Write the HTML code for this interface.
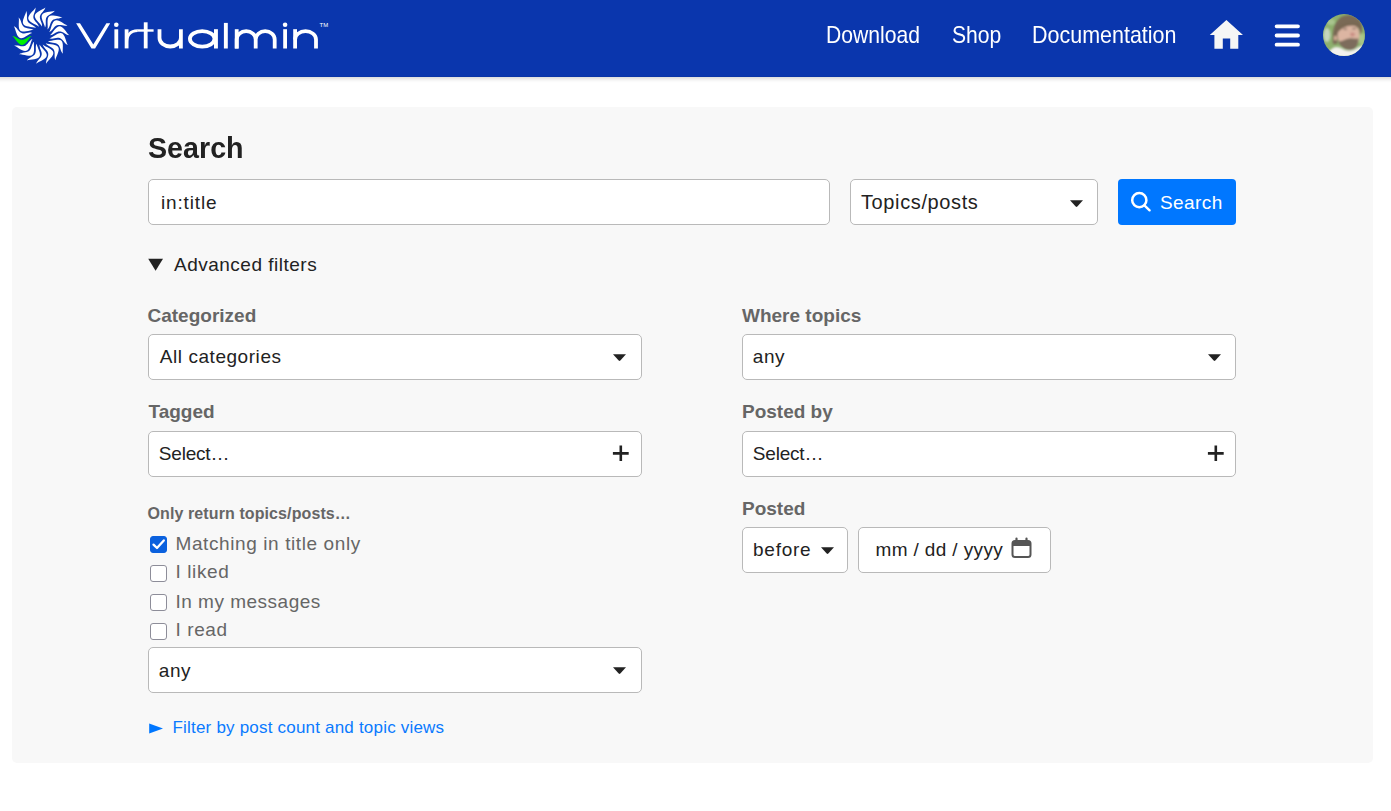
<!DOCTYPE html>
<html><head><meta charset="utf-8">
<style>
*{box-sizing:border-box;margin:0;padding:0}
html,body{width:1391px;height:811px;overflow:hidden;background:#fff;font-family:"Liberation Sans",sans-serif;color:#222}
.t{position:absolute;line-height:1;white-space:nowrap}
.hdr{position:absolute;left:0;top:0;width:1391px;height:76.5px;background:#0a36ad;border-bottom:1px solid #0834a6}
.shd{position:absolute;left:-20px;top:0;width:1431px;height:76.5px;box-shadow:0 2px 4px rgba(0,0,0,.16)}
.nav{position:absolute;top:22.5px;color:#fff;font-size:24px;line-height:1;white-space:nowrap;transform:scaleX(.88);transform-origin:0 0}
.panel{position:absolute;left:11.5px;top:106.5px;width:1361.5px;height:656.5px;background:#f8f8f8;border-radius:5px}
.inp{position:absolute;background:#fff;border:1px solid #b9b9b9;border-radius:5px;height:46px}
.r{font-size:19px;letter-spacing:.55px;color:#222}
.lbl{font-size:19px;font-weight:bold;color:#666}
.cbt{font-size:19px;letter-spacing:.6px;color:#666}
.caret{position:absolute}
.cb{position:absolute;left:149.5px;width:17px;height:17px;border:1.5px solid #8d8d99;border-radius:3px;background:#fff}
</style></head><body>
<div class="shd"></div>
<div class="hdr">
  <svg style="position:absolute;left:0;top:0" width="400" height="76" viewBox="0 0 400 76">
    <defs>
      <path id="bl" d="M-28.56,0.40 L-27.34,1.47 L-26.12,2.97 L-24.90,4.57 L-23.68,6.10 L-22.46,7.44 L-21.24,8.47 L-20.02,9.13 L-18.80,9.35 L-17.59,9.13 L-16.37,8.47 L-15.15,7.44 L-13.93,6.10 L-12.71,4.57 L-11.49,2.97 L-10.27,1.47 L-9.05,0.40 L-10.27,0.54 L-11.49,0.96 L-12.71,1.57 L-13.93,2.30 L-15.15,3.03 L-16.37,3.64 L-17.59,4.06 L-18.80,4.20 L-20.02,4.06 L-21.24,3.64 L-22.46,3.03 L-23.68,2.30 L-24.90,1.57 L-26.12,0.96 L-27.34,0.54Z"/>
    </defs>
    <g transform="translate(40.8 35.6)" fill="#fff">
      <use href="#bl" transform="rotate(20)"/><use href="#bl" transform="rotate(40)"/><use href="#bl" transform="rotate(60)"/>
      <use href="#bl" transform="rotate(80)"/><use href="#bl" transform="rotate(100)"/><use href="#bl" transform="rotate(120)"/>
      <use href="#bl" transform="rotate(140)"/><use href="#bl" transform="rotate(160)"/><use href="#bl" transform="rotate(180)"/>
      <use href="#bl" transform="rotate(200)"/><use href="#bl" transform="rotate(220)"/><use href="#bl" transform="rotate(240)"/>
      <use href="#bl" transform="rotate(260)"/><use href="#bl" transform="rotate(280)"/><use href="#bl" transform="rotate(300)"/>
      <use href="#bl" transform="rotate(320)"/><use href="#bl" transform="rotate(340)"/>
      <use href="#bl" fill="#00f000"/>
    </g>
    <g fill="#fff">
      <polygon points="76.1,23.2 80.0,23.2 93.3,44.6 106.4,23.2 110.2,23.2 95.1,48.4 91.5,48.4"/>
      <circle cx="116.3" cy="24.7" r="2.3"/>
      <rect x="114.4" y="29.3" width="3.8" height="19.1"/>
      <rect x="124.7" y="29.3" width="3.8" height="19.1"/>
      <rect x="143.8" y="22.3" width="3.8" height="26.1"/>
      <rect x="137.3" y="29.3" width="16.3" height="2.4"/>
      <rect x="223.9" y="22.9" width="3.9" height="25.6"/>
      <rect x="214" y="29.2" width="3.9" height="19.3"/>
      <circle cx="285.1" cy="24.8" r="2.3"/>
      <rect x="283.2" y="29.2" width="3.8" height="19.3"/>
      <rect x="234.8" y="29.2" width="3.8" height="19.3"/>
      <rect x="293.2" y="29.2" width="3.8" height="19.3"/>
    </g>
    <g fill="none" stroke="#fff" stroke-width="3.8">
      <path d="M126.6,44 C126.6,35 130,30.6 137.6,30.6" stroke-width="2.6"/>
      <path d="M159.5,29.3 V38 A10.7 8.5 0 0 0 180.9,38 V29.3 M180.9,36 V48.4"/>
      <ellipse cx="202.2" cy="38.85" rx="12.3" ry="7.75"/>
      <path d="M236.7,48.5 V39.5 A9.5 8.3 0 0 1 255.7,39.5 V48.5 M255.7,39.5 A9.5 8.3 0 0 1 274.7,39.5 V48.5"/>
      <path d="M295.1,39.5 A10.45 8.3 0 0 1 316,39.5 V48.5"/>
    </g>
    <text x="319.5" y="27.3" font-size="6" fill="#fff" font-family="Liberation Sans">TM</text>
  </svg>
  <div class="nav" style="left:826px">Download</div>
  <div class="nav" style="left:952px">Shop</div>
  <div class="nav" style="left:1032px;transform:scaleX(.895)">Documentation</div>
  <svg style="position:absolute;left:1209px;top:19px" width="35" height="31" viewBox="0 0 35 31">
    <path fill="#f6f6f6" d="M17.4,1 L34,16 H29.3 V29.8 H21.2 V19.5 H13.8 V29.8 H5.4 V16 H0.8Z"/>
  </svg>
  <svg style="position:absolute;left:1272px;top:22px" width="30" height="27" viewBox="0 0 30 27">
    <g stroke="#fff" stroke-width="3.8" stroke-linecap="round"><path d="M4.6,4.3 H26 M4.6,13.5 H26 M4.6,22.7 H26"/></g>
  </svg>
  <svg style="position:absolute;left:1322px;top:13px" width="44" height="44" viewBox="0 0 44 44">
    <defs><clipPath id="av"><circle cx="22" cy="22.1" r="21"/></clipPath>
    <filter id="bf" x="-20%" y="-20%" width="140%" height="140%"><feGaussianBlur stdDeviation="1"/></filter></defs>
    <g clip-path="url(#av)">
      <rect x="0" y="0" width="44" height="44" fill="#8db06e"/>
      <g filter="url(#bf)">
        <ellipse cx="5" cy="22" rx="3.5" ry="7" fill="#c6d6bd"/>
        <ellipse cx="9" cy="9" rx="4" ry="3" fill="#a9c58f"/>
        <ellipse cx="40" cy="26" rx="3" ry="6" fill="#a8c888"/>
        <path d="M11,31 C10,20 11,10 19,4 C26,0 35,2 39,9 C41,14 40,20 38.5,22 L37,16 C33,12 25,13 17,19 L15,31Z" fill="#7a6a56"/>
        <path d="M15.5,22 C16,15 24,12 30,12.5 C35,13 37.5,16 37.5,21 C38,28 36,33 30,34 C22,35 16,31 15.5,22Z" fill="#dcb5a2"/>
        <ellipse cx="30.5" cy="21.5" rx="2.3" ry="2" fill="#c98c82"/>
        <path d="M21.5,16.3 L25,16 M30.5,15.6 L34,15.5" stroke="#6b5a4e" stroke-width="1.1"/>
        <path d="M15,20 C19,15 26,12.3 32,12.3 C36,12.5 38,15 38.5,20 L39.5,13 C36,8 28,8 20,11 C15,13 12,17 13,22Z" fill="#786753"/>
        <ellipse cx="13.5" cy="25" rx="1.8" ry="2.6" fill="#d2ab95"/>
        <path d="M16,28 C19,29.5 23,26 27,25.5 C30,25 33,26 36.5,25.5 C36.5,31 34,36.5 29,37 C23,37.5 18,33 16,28Z" fill="#7d6c5c"/>
        <path d="M6,40 C10,34 14,33 19,35 C23,38 30,39 35,35 C38,33 41,32 44,33 L44,44 H2Z" fill="#f3f2ee"/>
      </g>
    </g>
  </svg>
</div>

<div class="panel"></div>
<div class="t" style="left:147.5px;top:132.5px;font-size:30px;font-weight:bold;color:#222;transform:scaleX(.955);transform-origin:0 0">Search</div>

<div class="inp" style="left:148px;top:179px;width:682px"></div>
<div class="t r" style="left:161px;top:192.8px;letter-spacing:.85px">in:title</div>

<div class="inp" style="left:850px;top:179px;width:248px"></div>
<div class="t r" style="left:861px;top:192.2px;font-size:20px;letter-spacing:.62px">Topics/posts</div>
<svg class="caret" style="left:1069px;top:199px" width="15" height="9" viewBox="0 0 15 9"><path d="M1,1.2 H14 L8.3,7.6 Q7.5,8.4 6.7,7.6Z" fill="#222"/></svg>

<div style="position:absolute;left:1118px;top:179px;width:118px;height:46px;background:#0077ff;border-radius:4px"></div>
<svg style="position:absolute;left:1129px;top:190px" width="25" height="25" viewBox="0 0 25 25"><circle cx="10.3" cy="10.2" r="7.1" fill="none" stroke="#fff" stroke-width="2.5"/><path d="M15.4,15.3 L20.6,20.3" stroke="#fff" stroke-width="2.4" stroke-linecap="round"/></svg>
<div class="t r" style="left:1160px;top:192.9px;color:#fff;letter-spacing:.4px">Search</div>

<svg style="position:absolute;left:147px;top:257px" width="18" height="15" viewBox="0 0 18 15"><path d="M1.2,1.7 H16 L8.6,13.7Z" fill="#222"/></svg>
<div class="t r" style="left:174px;top:254.6px;letter-spacing:.5px">Advanced filters</div>

<div class="t lbl" style="left:147.5px;top:305.8px">Categorized</div>
<div class="inp" style="left:148px;top:334px;width:494px"></div>
<div class="t r" style="left:159.8px;top:347.2px">All categories</div>
<svg class="caret" style="left:612px;top:353px" width="15" height="9" viewBox="0 0 15 9"><path d="M1,1.2 H14 L8.3,7.6 Q7.5,8.4 6.7,7.6Z" fill="#222"/></svg>

<div class="t lbl" style="left:148.5px;top:402.2px">Tagged</div>
<div class="inp" style="left:148px;top:431px;width:494px"></div>
<div class="t r" style="left:158.8px;top:443.9px;letter-spacing:-.2px">Select…</div>
<svg style="position:absolute;left:611px;top:444px" width="19" height="19" viewBox="0 0 19 19"><path d="M9.8,1.6 V17 M1.9,9.4 H17.7" stroke="#222" stroke-width="2.6"/></svg>

<div class="t" style="left:147.5px;top:506.3px;font-size:16px;font-weight:bold;color:#666;letter-spacing:.1px">Only return topics/posts…</div>

<div class="cb" style="top:535.5px;background:#0b61de;border-color:#0b61de"></div>
<svg style="position:absolute;left:149px;top:535px" width="18" height="18" viewBox="0 0 18 18"><path d="M4.5,9.6 L8,13 L14.8,5.4" fill="none" stroke="#fff" stroke-width="2.3" stroke-linecap="round" stroke-linejoin="round"/></svg>
<div class="t cbt" style="left:175.5px;top:533.5px">Matching in title only</div>
<div class="cb" style="top:564.5px"></div>
<div class="t cbt" style="left:175.5px;top:562.1px">I liked</div>
<div class="cb" style="top:593.8px"></div>
<div class="t cbt" style="left:175.5px;top:591.6px;letter-spacing:.5px">In my messages</div>
<div class="cb" style="top:622.6px"></div>
<div class="t cbt" style="left:175.5px;top:620.2px">I read</div>

<div class="inp" style="left:148px;top:647px;width:494px"></div>
<div class="t r" style="left:158.8px;top:660.6px">any</div>
<svg class="caret" style="left:612px;top:666px" width="15" height="9" viewBox="0 0 15 9"><path d="M1,1.2 H14 L8.3,7.6 Q7.5,8.4 6.7,7.6Z" fill="#222"/></svg>

<svg style="position:absolute;left:148px;top:722px" width="17" height="13" viewBox="0 0 17 13"><path d="M1.2,1.6 L15,6.5 L1.2,11.4Z" fill="#0077ff"/></svg>
<div class="t" style="left:172.5px;top:718.9px;font-size:17px;letter-spacing:.2px;color:#0a7aff">Filter by post count and topic views</div>

<div class="t lbl" style="left:742px;top:305.8px">Where topics</div>
<div class="inp" style="left:742px;top:334px;width:494px"></div>
<div class="t r" style="left:752.8px;top:347.2px">any</div>
<svg class="caret" style="left:1207px;top:353px" width="15" height="9" viewBox="0 0 15 9"><path d="M1,1.2 H14 L8.3,7.6 Q7.5,8.4 6.7,7.6Z" fill="#222"/></svg>

<div class="t lbl" style="left:742px;top:402.2px">Posted by</div>
<div class="inp" style="left:742px;top:431px;width:494px"></div>
<div class="t r" style="left:752.8px;top:443.9px;letter-spacing:-.2px">Select…</div>
<svg style="position:absolute;left:1206px;top:444px" width="19" height="19" viewBox="0 0 19 19"><path d="M9.8,1.6 V17 M1.9,9.4 H17.7" stroke="#222" stroke-width="2.6"/></svg>

<div class="t lbl" style="left:742px;top:499.1px">Posted</div>
<div class="inp" style="left:742px;top:527px;width:106px"></div>
<div class="t r" style="left:753px;top:540.4px;letter-spacing:.75px">before</div>
<svg class="caret" style="left:820px;top:546px" width="15" height="9" viewBox="0 0 15 9"><path d="M1,1.2 H14 L8.3,7.6 Q7.5,8.4 6.7,7.6Z" fill="#222"/></svg>
<div class="inp" style="left:858px;top:527px;width:193px"></div>
<div class="t r" style="left:875.5px;top:540.4px;letter-spacing:.37px">mm / dd / yyyy</div>
<svg style="position:absolute;left:1010px;top:537px" width="23" height="23" viewBox="0 0 23 23"><g fill="none" stroke="#555" stroke-width="2"><rect x="2.5" y="4" width="18" height="16" rx="2.5"/></g><path d="M2.5,6.5 Q2.5,4 5,4 H18 Q20.5,4 20.5,6.5 V9 H2.5Z" fill="#555"/><path d="M6.5,1.5 V5 M16.5,1.5 V5" stroke="#555" stroke-width="2.2" stroke-linecap="round"/></svg>
</body></html>
